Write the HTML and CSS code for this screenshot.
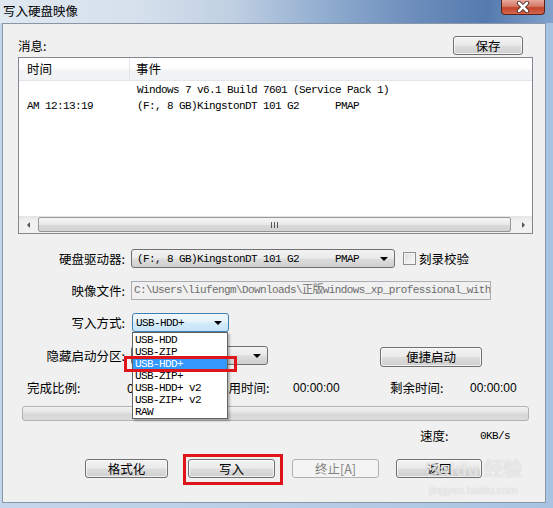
FILE: index.html
```html
<!DOCTYPE html>
<html>
<head>
<meta charset="utf-8">
<link rel="stylesheet" href="styles.css">
</head>
<body>
<div class="window">
  <div class="titlebar">
    <span class="title">写入硬盘映像</span>
    <div class="close">
      <svg width="16" height="12" viewBox="0 0 16 12">
        <path d="M4 2 L12 10 M12 2 L4 10" stroke="#4a2a25" stroke-width="4.4" stroke-linecap="round"/>
        <path d="M4 2 L12 10 M12 2 L4 10" stroke="#ffffff" stroke-width="2.6" stroke-linecap="round"/>
      </svg>
    </div>
  </div>
  <div class="client">
    <div class="row-msg">
      <span class="lbl">消息:</span>
      <button class="btn save">保存</button>
    </div>
    <div class="listbox">
      <div class="lv-head">
        <div class="hc1">时间</div>
        <div class="hc2">事件</div>
      </div>
      <div class="lv-body mono">
        <div class="lv-row"><span class="c1"></span><span class="c2">Windows 7 v6.1 Build 7601 (Service Pack 1)</span></div>
        <div class="lv-row"><span class="c1">AM 12:13:19</span><span class="c2">(F:, 8 GB)KingstonDT 101 G2      PMAP</span></div>
      </div>
      <div class="hscroll">
        <div class="sb-btn"><span class="tri-left"></span></div>
        <div class="sb-thumb"><span class="grip"></span></div>
        <div class="sb-btn"><span class="tri-right"></span></div>
      </div>
    </div>

    <div class="form">
      <div class="frow r1">
        <span class="flabel">硬盘驱动器:</span>
        <div class="combo w-drive"><span class="mono">(F:, 8 GB)KingstonDT 101 G2      PMAP</span><span class="arrow"></span></div>
        <div class="check"></div>
        <span class="checklbl">刻录校验</span>
      </div>
      <div class="frow r2">
        <span class="flabel">映像文件:</span>
        <div class="textbox mono">C:\Users\liufengm\Downloads\正版windows_xp_professional_with_service_pack_3.iso</div>
      </div>
      <div class="frow r3">
        <span class="flabel">写入方式:</span>
        <div class="combo focus w-mode"><span class="mono">USB-HDD+</span><span class="arrow"></span></div>
      </div>
      <div class="frow r4">
        <span class="flabel">隐藏启动分区:</span>
        <div class="combo w-hide"><span class="mono"></span><span class="arrow"></span></div>
        <button class="btn quick">便捷启动</button>
      </div>
    </div>

    <div class="stats">
      <span>完成比例:</span>
      <span>0%</span>
      <span>已用时间:</span>
      <span class="num">00:00:00</span>
      <span>剩余时间:</span>
      <span class="num">00:00:00</span>
    </div>

    <div class="progress"></div>

    <div class="speed">
      <span>速度:</span>
      <span class="mono">0KB/s</span>
    </div>

    <div class="buttons">
      <button class="btn b-format">格式化</button>
      <button class="btn b-write">写入</button>
      <button class="btn b-stop" disabled>终止[A]</button>
      <button class="btn b-back">返回</button>
    </div>

    <div class="dropdown mono">
      <div class="opt">USB-HDD</div>
      <div class="opt">USB-ZIP</div>
      <div class="opt sel">USB-HDD+</div>
      <div class="opt">USB-ZIP+</div>
      <div class="opt">USB-HDD+ v2</div>
      <div class="opt">USB-ZIP+ v2</div>
      <div class="opt">RAW</div>
    </div>
    <div class="redbox rb-opt"></div>
    <div class="redbox rb-write"></div>

    <div class="watermark">
      <div class="wm-big">Bai<span class="paw">du</span> 经验</div>
      <div class="wm-small">jingyan.baidu.com</div>
    </div>
  </div>
</div>
</body>
</html>
```

FILE: styles.css
```css
* { box-sizing: border-box; }

body {
  margin: 0;
  width: 553px;
  height: 508px;
  overflow: hidden;
  font-family: "Noto Sans CJK SC", "Liberation Sans", sans-serif;
  font-size: 12.5px;
  color: #000;
}

.mono {
  font-family: "Liberation Mono", "Noto Sans CJK SC", monospace;
  font-size: 11px;
  letter-spacing: -0.6px;
}

.window {
  width: 553px;
  height: 508px;
  display: flex;
  flex-direction: column;
  background: linear-gradient(to right, #c4d6ea 0%, #b9cee6 50%, #a7c3e2 100%);
}

.titlebar {
  height: 23px;
  position: relative;
  background: linear-gradient(to right, #e0e8f1 0%, #d5e0ec 25%, #c0d0e2 42%, #92aed0 58%, #6e8fbd 74%, #557aae 88%, #7fa1cc 100%);
}

.title {
  display: block;
  padding-left: 3px;
  line-height: 22px;
  font-size: 12.5px;
  color: #000;
}

.close {
  position: absolute;
  right: 8px;
  top: 0;
  width: 44px;
  height: 15px;
  border: 1px solid #5b2219;
  border-top: none;
  border-radius: 0 0 4px 4px;
  background: linear-gradient(to bottom, #e8a99c 0%, #d47a67 45%, #c2432c 55%, #d5664c 100%);
  display: flex;
  align-items: center;
  justify-content: center;
}

.client {
  flex: 1;
  margin: 0 7px 5px 2px;
  background: #f0f0f0;
  border: 1px solid #8996a8;
  position: relative;
  padding: 0 12px 0 15px;
  display: flex;
  flex-direction: column;
}

.btn {
  font-family: "Noto Sans CJK SC", sans-serif;
  font-size: 12.5px;
  color: #000;
  padding: 0;
  border: 1px solid #707070;
  border-radius: 3px;
  background: linear-gradient(to bottom, #f2f2f2 0%, #ebebeb 48%, #dddddd 52%, #cfcfcf 100%);
  box-shadow: inset 0 0 0 1px rgba(255,255,255,0.7);
  line-height: 16px;
}

.btn:disabled {
  border-color: #adb2b5;
  background: #f4f4f4;
  color: #838383;
  box-shadow: none;
}

/* message row */
.row-msg {
  margin-top: 12px;
  height: 19px;
  display: flex;
  align-items: center;
}
.lbl { line-height: 19px; }
.save {
  margin-left: auto;
  margin-right: 10px;
  width: 70px;
  height: 19px;
}

/* list view */
.listbox {
  margin-top: 2px;
  height: 177px;
  border: 1px solid #828790;
  background: #fff;
  display: flex;
  flex-direction: column;
}
.lv-head {
  height: 23px;
  display: flex;
  background: linear-gradient(to bottom, #ffffff 0%, #ffffff 45%, #f3f4f5 55%, #f1f2f3 100%);
  border-bottom: 1px solid #e3e5e8;
}
.hc1 {
  width: 111px;
  padding-left: 8px;
  line-height: 22px;
  border-right: 1px solid #e3e5e8;
}
.hc2 {
  padding-left: 6px;
  line-height: 22px;
}
.lv-body {
  flex: 1;
  padding-top: 1px;
}
.lv-row {
  display: flex;
  height: 16px;
  line-height: 16px;
  white-space: pre;
}
.c1 { width: 111px; padding-left: 8px; }
.c2 { padding-left: 7px; }

.hscroll {
  height: 17px;
  display: flex;
  background: linear-gradient(to bottom, #e4e4e4 0%, #f1f1f1 30%, #f1f1f1 100%);
  align-items: center;
}
.sb-btn {
  width: 18px;
  height: 17px;
  display: flex;
  align-items: center;
  justify-content: center;
}
.tri-left {
  width: 0; height: 0;
  border-top: 3px solid transparent;
  border-bottom: 3px solid transparent;
  border-right: 3px solid #555;
}
.tri-right {
  width: 0; height: 0;
  border-top: 3px solid transparent;
  border-bottom: 3px solid transparent;
  border-left: 3px solid #555;
}
.sb-thumb {
  flex: 1;
  height: 15px;
  margin: 0 3px 0 1px;
  border: 1px solid #979797;
  border-radius: 2px;
  background: linear-gradient(to bottom, #f5f5f5 0%, #e9e9e9 50%, #d9d9d9 52%, #d2d2d2 100%);
  display: flex;
  align-items: center;
  justify-content: center;
}
.grip {
  width: 7px;
  height: 6px;
  background: repeating-linear-gradient(to right, #555 0 1px, transparent 1px 3px);
}

/* form */
.form {
  margin-top: 15px;
  display: flex;
  flex-direction: column;
}
.frow {
  display: flex;
  align-items: center;
  height: 19px;
}
.r1 { margin-bottom: 13px; }
.r2 { margin-bottom: 13px; }
.r3 { margin-bottom: 14px; }
.r4 { height: 21px; align-items: flex-start; }

.flabel {
  width: 107px;
  margin-right: 6px;
  text-align: right;
  line-height: 19px;
  white-space: nowrap;
}

.combo {
  height: 19px;
  border: 1px solid #707070;
  border-radius: 3px;
  background: linear-gradient(to bottom, #f2f2f2 0%, #ebebeb 48%, #dddddd 52%, #cfcfcf 100%);
  display: flex;
  align-items: center;
  padding-left: 5px;
  position: relative;
  white-space: pre;
}
.combo.focus {
  border-color: #3c7fb1;
  background: linear-gradient(to bottom, #f1f8fd 0%, #e4f2fb 48%, #d3ebfa 52%, #c6e4f7 100%);
  padding-left: 3px;
}
.arrow {
  position: absolute;
  right: 6px;
  top: 7px;
  width: 0; height: 0;
  border-left: 4px solid transparent;
  border-right: 4px solid transparent;
  border-top: 4px solid #000;
}
.w-drive { width: 264px; }
.w-mode { width: 97px; margin-left: 1px; }
.w-hide { width: 137px; }

.check {
  width: 13px;
  height: 13px;
  margin-left: 8px;
  border: 1px solid #8e8f8f;
  background: linear-gradient(135deg, #dcdcdc 0%, #fbfbfb 100%);
  box-shadow: inset 0 0 0 1px #f4f4f4;
}
.checklbl {
  margin-left: 3px;
  font-size: 12.5px;
  line-height: 19px;
}

.textbox {
  width: 360px;
  height: 19px;
  border: 1px solid #abadb3;
  background: #f0f0f0;
  color: #6d6d6d;
  line-height: 17px;
  padding-left: 2px;
  overflow: hidden;
  white-space: nowrap;
}

.quick {
  margin-left: 112px;
  margin-top: 1px;
  width: 102px;
  height: 20px;
}

/* stats */
.stats {
  margin-top: 13px;
  height: 16px;
  line-height: 16px;
  padding-left: 9px;
  display: grid;
  grid-template-columns: 100px 89px 77px 97px 80px auto;
  white-space: nowrap;
}
.num {
  font-family: "Liberation Sans", sans-serif;
  font-size: 12px;
}

.progress {
  margin-top: 10px;
  margin-left: 4px;
  width: 507px;
  height: 15px;
  border: 1px solid #b2b2b2;
  border-radius: 3px;
  background: linear-gradient(to bottom, #f3f3f3 0%, #e4e4e4 40%, #d6d6d6 60%, #dcdcdc 100%);
}

.speed {
  margin-top: 7px;
  height: 16px;
  line-height: 16px;
  padding-left: 402px;
  display: grid;
  grid-template-columns: 60px auto;
}

.buttons {
  margin-top: 15px;
  height: 19px;
  padding-left: 67px;
  display: flex;
}
.buttons .btn { height: 19px; }
.b-format { width: 83px; }
.b-write { width: 87px; margin-left: 20px; }
.b-stop { width: 87px; margin-left: 17px; }
.b-back { width: 86px; margin-left: 17px; }

/* overlays */
.dropdown {
  position: absolute;
  left: 129px;
  top: 308px;
  width: 96px;
  height: 87px;
  background: #fff;
  border: 1px solid #646464;
  box-shadow: 2px 2px 2px rgba(0,0,0,0.25);
  padding-top: 1px;
}
.opt {
  height: 12px;
  line-height: 12px;
  padding-left: 2px;
  white-space: pre;
}
.opt.sel {
  background: #3399ff;
  color: #fff;
}

.redbox {
  position: absolute;
  border: 3px solid #e0151b;
}
.rb-opt {
  left: 121px;
  top: 332px;
  width: 113px;
  height: 16px;
}
.rb-write {
  left: 180px;
  top: 430px;
  width: 100px;
  height: 31px;
}

.watermark {
  position: absolute;
  left: 422px;
  top: 433px;
  width: 110px;
  color: rgba(255,255,255,0.6);
  text-shadow: 0 0 1px rgba(140,140,140,0.45);
  pointer-events: none;
}
.wm-big {
  font-family: "Liberation Sans", "Noto Sans CJK SC", sans-serif;
  font-size: 19px;
  font-weight: bold;
  line-height: 26px;
  white-space: nowrap;
}
.paw { margin-left: 1px; }
.wm-small {
  font-family: "Liberation Sans", sans-serif;
  font-size: 11px;
  line-height: 14px;
  padding-left: 4px;
}
```
